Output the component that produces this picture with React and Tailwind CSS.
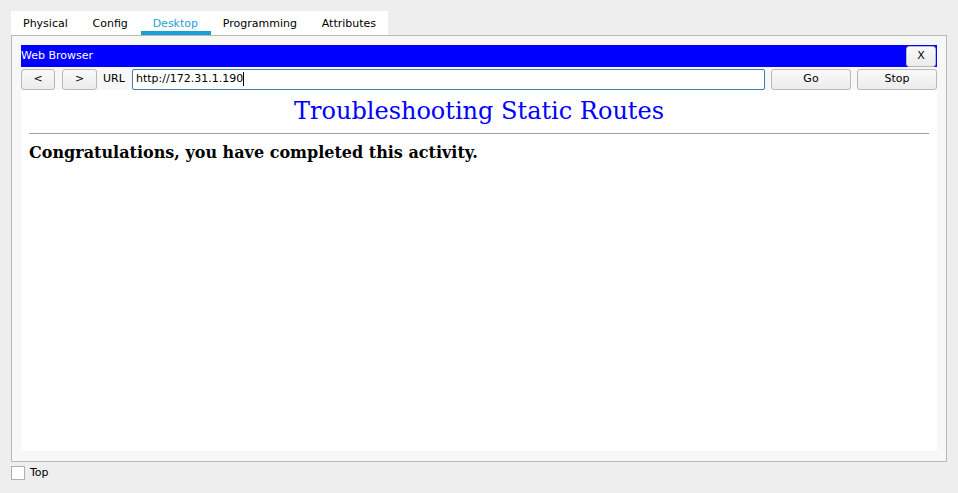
import React from "react";

const ui = { fontFamily: '"DejaVu Sans", sans-serif' };
const serif = { fontFamily: '"DejaVu Serif", serif' };

function Tab({ label, active }) {
    return (
        <div className={"h-full flex items-center pt-[2px] pl-[12px] pr-[12.8px] relative " + (active ? "text-[#1e9fd8]" : "text-black")}>
            {label}
            {active && <div className="absolute left-0 right-0 bottom-0 h-[4px] bg-[#1a9ed6]" />}
        </div>
    );
}

function Btn({ children, className = "" }) {
    return (
        <div className={"h-[21px] flex items-center justify-center rounded-[3px] border border-[#b9b9b9] bg-gradient-to-b from-[#f9f9f9] to-[#ececec] text-black " + className}>
            {children}
        </div>
    );
}

export default function App() {
    return (
        <div className="w-[958px] h-[493px] bg-[#eeeeee] text-[11px] overflow-hidden pt-[11px] pl-[11px]" style={ui}>
            <div className="flex h-[24px] w-[377px] bg-white">
                <Tab label="Physical" />
                <Tab label="Config" />
                <Tab label="Desktop" active />
                <Tab label="Programming" />
                <Tab label="Attributes" />
            </div>
            <div className="w-[936px] h-[427px] border border-[#b8b8b8] bg-[#f7f7f7] px-[9px] pt-[9px]">
                <div className="w-[916px] flex flex-col h-[406px] bg-white">
                    <div className="h-[22px] bg-[#0000ff] flex items-center justify-between">
                        <span className="text-white">Web Browser</span>
                        <Btn className="w-[30px] mr-[1px]">X</Btn>
                    </div>
                    <div className="flex items-center h-[23px] pt-[1px] bg-[#f7f7f7]">
                        <Btn className="w-[34px]">&lt;</Btn>
                        <Btn className="w-[35px] ml-[7px]">&gt;</Btn>
                        <span className="ml-[6px] w-[29px]">URL</span>
                        <div className="w-[633px] h-[21px] border border-[#3f7fae] rounded-[2px] bg-white flex items-center pl-[3px] text-black">
                            http://172.31.1.190<span className="w-px h-[14px] bg-black" />
                        </div>
                        <Btn className="w-[80px] ml-[6px]">Go</Btn>
                        <Btn className="w-[80px] ml-[6px]">Stop</Btn>
                    </div>
                    <div className="flex-1 px-[8px]" style={serif}>
                        <h1 className="text-center text-[#0000ff] text-[24px] leading-[28px] mt-[7px]">Troubleshooting Static Routes</h1>
                        <div className="mt-[8px] border-t border-[#a0a0a0]" />
                        <p className="mt-[7px] text-[16px] font-bold text-black">Congratulations, you have completed this activity.</p>
                    </div>
                </div>
            </div>
            <div className="flex items-center mt-[4px] h-[14px]">
                <div className="w-[14px] h-[14px] border border-[#b0b0b0] bg-white" />
                <span className="ml-[5px] text-black">Top</span>
            </div>
        </div>
    );
}
